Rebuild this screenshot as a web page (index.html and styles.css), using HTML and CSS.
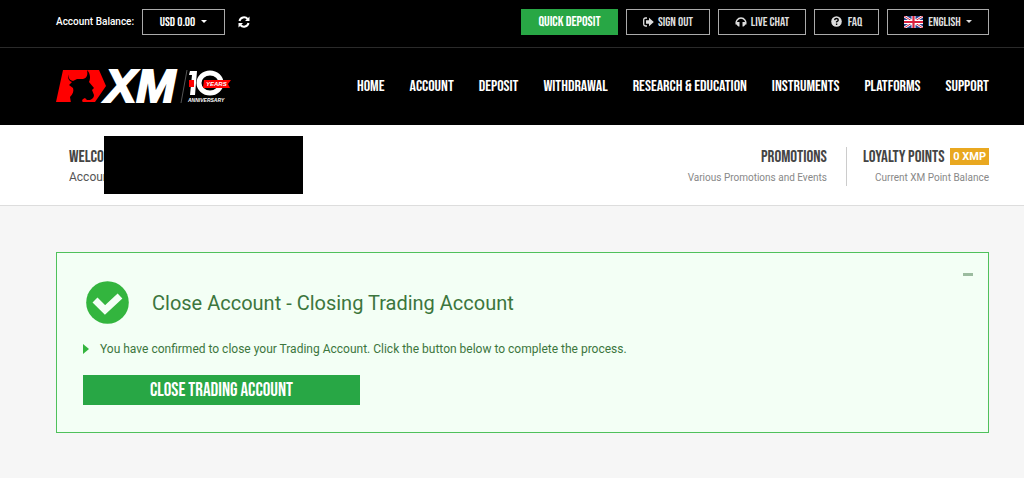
FILE: index.html
```html
<!DOCTYPE html>
<html lang="en">
<head>
    <meta charset="UTF-8">
    <meta name="viewport" content="width=device-width, initial-scale=1.0">
    <title>Close Trading Account</title>
    <link rel="stylesheet" href="styles.css">
</head>
<body>
    <div class="topbar">
        <span class="balance-label">Account Balance:</span>
        <button type="button" class="btn btn-balance">USD 0.00 <span class="caret"></span></button>
        <button type="button" class="refresh" aria-label="Refresh balance">
            <svg width="12" height="12" viewBox="0 0 12 12" fill="none" stroke="#fff" stroke-width="2">
                <path d="M1.5 5A4.6 4.6 0 0 1 9.6 3M10.5 7A4.6 4.6 0 0 1 2.4 9"/>
                <path d="M11.5 .5v4.5H7zM.5 11.5V7H5z" fill="#fff" stroke="none"/>
            </svg>
        </button>
        <div class="topbar-actions">
            <button type="button" class="btn btn-deposit">Quick Deposit</button>
            <button type="button" class="btn btn-signout">
                <svg width="11" height="10" viewBox="0 0 11 10"><path d="M4 1H2.500Q.7 1 .7 2.800v4.400Q.7 9 2.500 9H4" fill="none" stroke="#ddd" stroke-width="1.300"/><path d="M3 3.300h3V.8L10.800 5 6 9.200V6.700H3z" fill="#ddd"/></svg>
                Sign Out
            </button>
            <button type="button" class="btn btn-chat">
                <svg width="12" height="10" viewBox="0 0 12 10"><path d="M1.500 7.500A4.800 4.800 0 1 1 10.500 7.500" fill="none" stroke="#ddd" stroke-width="1.500"/><path d="M2 5h2.500v4.500H3.500Q2 8.500 1.500 7zM10 5H7.500v4.500h1Q10 8.500 10.500 7z" fill="#ddd"/></svg>
                Live Chat
            </button>
            <button type="button" class="btn btn-faq">
                <svg width="11" height="11" viewBox="0 0 11 11"><circle cx="5.500" cy="5.500" r="5.300" fill="#ddd"/><path d="M3.600 4.200Q3.800 2.500 5.500 2.500T7.300 4.100Q7.300 5 5.600 5.800v.8M5.600 7.500v1.500" fill="none" stroke="#000" stroke-width="1.400"/></svg>
                FAQ
            </button>
            <button type="button" class="btn btn-language">
                <svg width="19" height="12" viewBox="0 0 19 12">
                    <path d="M0 0h19v12H0z" fill="#24408e"/>
                    <path d="M0 0l19 12M19 0L0 12" stroke="#fff" stroke-width="2.600"/>
                    <path d="M0 0l19 12M19 0L0 12" stroke="#d8203f" stroke-width="1"/>
                    <path d="M9.500 0v12M0 6h19" stroke="#fff" stroke-width="4"/>
                    <path d="M9.500 0v12M0 6h19" stroke="#d8203f" stroke-width="2.200"/>
                </svg>
                English <span class="caret"></span>
            </button>
        </div>
    </div>

    <header class="header">
        <a href="#" class="logo" aria-label="XM 10 years anniversary">
            <svg width="176" height="36" viewBox="0 0 176 36">
                <path d="M7 1H43L50 17 39 33H0z" fill="#f00"/>
                <path d="M13 5C11 9 13 12 16 13L13 16 17 19C18 22 17 25 14 28L15 34H28C25 32 26 30 29 29L31 31H34C36 30 38 29 38 26L36 21 38 19 33 13C35 9 34 4 31 1 32 6 31 9 27 10H21L17 12C13 11 12 8 13 5z" fill="#000"/>
                <text x="49" y="33" class="logo-xm">XM</text>
                <path d="M131 1L125 34" stroke="#555" stroke-width="1"/>
                <path d="M141 2h-7l-1 4h3l-2 20h5z" fill="#fff"/>
                <ellipse cx="154" cy="14" rx="11" ry="10" fill="none" stroke="#fff" stroke-width="5"/>
                <path d="M133 11h5v7h-5zM148 11h27l-3 4 2 4h-27z" fill="#f00"/>
                <text x="150" y="17" class="logo-years">YEARS</text>
                <text x="132" y="33" class="logo-anniversary">ANNIVERSARY</text>
            </svg>
        </a>
        <nav class="nav">
            <a href="#">Home</a>
            <a href="#">Account</a>
            <a href="#">Deposit</a>
            <a href="#">Withdrawal</a>
            <a href="#">Research &amp; Education</a>
            <a href="#">Instruments</a>
            <a href="#">Platforms</a>
            <a href="#">Support</a>
        </nav>
    </header>

    <section class="welcome">
        <div class="member">
            <h2>Welcome</h2>
            <p>Account</p>
            <span class="mask"></span>
        </div>
        <div class="info">
            <h2>Promotions</h2>
            <p>Various Promotions and Events</p>
        </div>
        <div class="info info-points">
            <h2>Loyalty Points <span class="badge">0 XMP</span></h2>
            <p>Current XM Point Balance</p>
        </div>
    </section>

    <main class="main">
        <section class="alert">
            <button type="button" class="collapse" aria-label="Collapse"></button>
            <div class="alert-title">
                <svg width="43" height="43" viewBox="0 0 43 43"><circle cx="21.500" cy="21.500" r="21.300" fill="#33b53e"/><path d="M9 19l10 10L34 15" fill="none" stroke="#f3fff5" stroke-width="7"/></svg>
                <h1>Close Account - Closing Trading Account</h1>
            </div>
            <p class="message">You have confirmed to close your Trading Account. Click the button below to complete the process.</p>
            <button type="button" class="btn-close">Close Trading Account</button>
        </section>
    </main>
</body>
</html>
```
FILE: styles.css
```css
* { box-sizing: border-box; }
body { margin: 0; background: #f6f6f6; color: #444; font-family: Roboto, sans-serif; font-size: 12px; }
h1, h2, p { margin: 0; }
button { margin: 0; padding: 0; border: none; background: none; cursor: pointer; }

/* condensed headings and controls */
.btn, .nav a, .welcome h2, .btn-close { font-family: "Bebas Neue", "Liberation Sans Narrow", "Liberation Sans", sans-serif; font-weight: 400; text-transform: uppercase; white-space: nowrap; }

.topbar { display: flex; align-items: center; height: 48px; padding: 0 35px 4px 56px; background: #000; border-bottom: 1px solid #2a2a2a; color: #fff; }
.balance-label { width: 86px; white-space: nowrap; font-size: 10px; font-weight: 500; }
.btn { display: flex; align-items: center; justify-content: center; gap: 4px; height: 26px; border: 1px solid #aaa; color: #ddd; font-size: 13px; }
.btn-balance { width: 83px; gap: 6px; color: #fff; }
.caret { border: 3px solid transparent; border-top-color: currentColor; border-bottom: 0; }
.refresh { display: flex; margin-left: 13px; }
.topbar-actions { display: flex; gap: 8px; margin-left: auto; }
.btn-deposit { width: 97px; background: #28a745; border-color: #28a745; color: #fff; font-size: 14px; }
.btn-signout { width: 84px; }
.btn-chat { width: 88px; }
.btn-faq { width: 65px; gap: 6px; }
.btn-language { width: 102px; gap: 5px; }

.header { display: flex; align-items: center; justify-content: space-between; height: 77px; padding: 0 35px 0 56px; background: #000; }
.logo { display: flex; }
.logo svg { overflow: visible; }
.logo-xm { fill: #fff; stroke: #fff; stroke-width: 2px; font: italic bold 47px "Liberation Sans", sans-serif; }
.logo-years { fill: #fff; font: italic bold 6px "Liberation Sans", sans-serif; }
.logo-anniversary { fill: #fff; font: italic bold 5px "Liberation Sans", sans-serif; }
.nav { display: flex; justify-content: space-between; width: 632px; }
.nav a { color: #fff; font-size: 16px; text-decoration: none; }

.welcome { display: flex; height: 81px; padding: 22px 35px 0 69px; background: #fff; border-bottom: 1px solid #ddd; }
.welcome h2 { color: #444; font-size: 17px; line-height: 21px; }
.welcome p { color: #888; font-size: 10px; line-height: 20px; }
.member { position: relative; margin-right: auto; }
.welcome .member p { color: #555; font-size: 12px; line-height: 18px; }
.mask { position: absolute; top: -11px; left: 35px; width: 199px; height: 58px; background: #000; }
.info { height: 39px; text-align: right; }
.info-points { margin-left: 19px; padding-left: 16px; border-left: 1px solid #ccc; }
.badge { display: inline-block; margin: 1px 0 0 3px; padding: 0 3px; background: #e9a820; color: #fff; font-family: Roboto, sans-serif; font-size: 11px; font-weight: bold; line-height: 17px; vertical-align: top; }

.main { padding: 46px 35px 45px 56px; }
.alert { position: relative; height: 181px; padding: 28px 26px; background: #f3fff5; border: 1px solid #4fc15b; color: #3c763d; }
.collapse { position: absolute; top: 20px; right: 15px; width: 10px; height: 3px; background: #9bbc9f; }
.alert-title { display: flex; align-items: center; gap: 23px; padding-left: 3px; }
.alert-title h1 { font-size: 20px; font-weight: 400; line-height: 28px; }
.message { display: flex; align-items: center; gap: 11px; margin-top: 15px; line-height: 20px; }
.message::before { content: ""; border: 5px solid transparent; border-left: 6px solid #33b53e; border-right: 0; }
.btn-close { display: block; width: 277px; height: 30px; margin-top: 16px; background: #28a745; color: #fff; font-size: 19px; }
```
